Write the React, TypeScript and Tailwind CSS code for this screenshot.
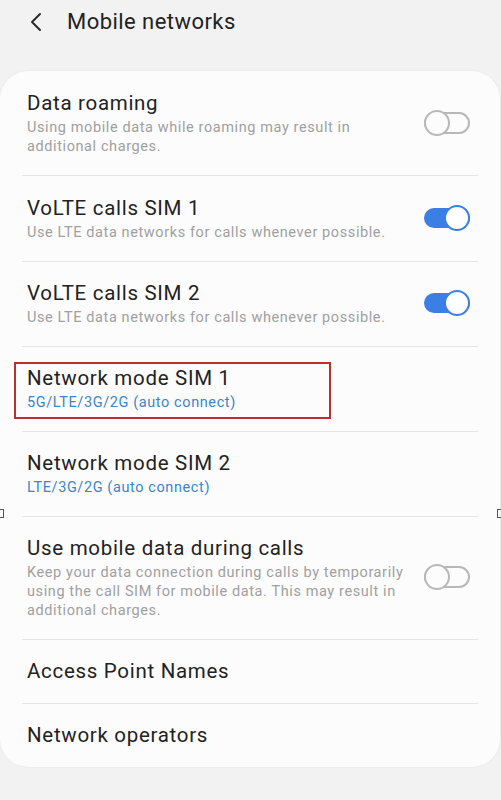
type Row = {
  title: string;
  sub?: string;
  blue?: boolean;
  toggle?: "on" | "off";
  marked?: boolean;
};

const rows: Row[] = [
  {
    title: "Data roaming",
    sub: "Using mobile data while roaming may result in additional charges.",
    toggle: "off",
  },
  {
    title: "VoLTE calls SIM 1",
    sub: "Use LTE data networks for calls whenever possible.",
    toggle: "on",
  },
  {
    title: "VoLTE calls SIM 2",
    sub: "Use LTE data networks for calls whenever possible.",
    toggle: "on",
  },
  {
    title: "Network mode SIM 1",
    sub: "5G/LTE/3G/2G (auto connect)",
    blue: true,
    marked: true,
  },
  {
    title: "Network mode SIM 2",
    sub: "LTE/3G/2G (auto connect)",
    blue: true,
  },
  {
    title: "Use mobile data during calls",
    sub: "Keep your data connection during calls by temporarily using the call SIM for mobile data. This may result in additional charges.",
    toggle: "off",
  },
  { title: "Access Point Names" },
  { title: "Network operators" },
];

const Toggle = ({ on }: { on: boolean }) =>
  on ? (
    <div className="w-[46px] h-[20px] rounded-full bg-[#3b7fe4] flex items-center justify-end">
      <div className="w-[26px] h-[26px] shrink-0 rounded-full bg-white border-2 border-[#3b7fe4]" />
    </div>
  ) : (
    <div className="w-[46px] h-[22px] rounded-full border-2 border-[#b8b8b8] flex items-center justify-start">
      <div className="w-[26px] h-[26px] shrink-0 -ml-[2px] rounded-full bg-[#fcfcfc] border-2 border-[#b8b8b8]" />
    </div>
  );

export default function App() {
  return (
    <div
      className="relative w-[501px] h-[800px] bg-[#f2f2f2] overflow-hidden"
      style={{ fontFamily: "Roboto, 'Noto Sans', sans-serif" }}
    >
      {/* header */}
      <div className="h-[71px] flex items-start pt-[7px]">
        <div className="w-[67px] h-[30px] flex items-center pl-[29px]">
          <svg width="14" height="20" viewBox="0 0 14 20" fill="none">
            <path d="M11 2 L3 10 L11 18" stroke="#2a2a2a" strokeWidth="2" strokeLinecap="round" strokeLinejoin="round" />
          </svg>
        </div>
        <h1 className="text-[22px] leading-[30px] tracking-[0.45px] text-[#222]">Mobile networks</h1>
      </div>

      {/* card */}
      <div className="w-[500px] bg-[#fcfcfc] rounded-[28px] shadow-[0_0_2px_rgba(0,0,0,0.08)] px-[22px]">
        {rows.map((r, i) => (
          <div
            key={r.title}
            className={
              "relative flex items-center border-[#e5e5e5] " +
              (i < rows.length - 1 ? "border-b " : "") +
              (r.sub ? "pt-[17px] pb-[19px] " : "pt-[17px] pb-[18px] ") +
              (i === 0 ? "pt-[18px]" : "") +
              (i === 1 ? "pt-[18px]" : "")
            }
          >
            <div className="flex-1 pl-[5px] pr-[16px]">
              <div className="text-[20.5px] leading-[28px] tracking-[0.7px] text-[#222]">{r.title}</div>
              {r.sub && (
                <div
                  className={
                    r.blue
                      ? "text-[14.5px] leading-[19px] tracking-[0.6px] text-[#3e84c6] mt-[1px]"
                      : "text-[14.5px] leading-[19px] tracking-[0.6px] text-[#a0a0a0] mt-[1px]"
                  }
                >
                  {r.sub}
                </div>
              )}
            </div>
            {r.toggle && (
              <div className="pr-[8px]">
                <Toggle on={r.toggle === "on"} />
              </div>
            )}
            {r.marked && (
              <div className="absolute left-[-8px] top-[15px] w-[317px] h-[57px] border-2 border-[#b5322f]" />
            )}
          </div>
        ))}
      </div>

      {/* edge markers */}
      <div className="absolute left-0 top-[509px] w-[4px] h-[9px] border border-l-0 border-[#555]" />
      <div className="absolute right-0 top-[509px] w-[4px] h-[9px] border border-r-0 border-[#555]" />
    </div>
  );
}
